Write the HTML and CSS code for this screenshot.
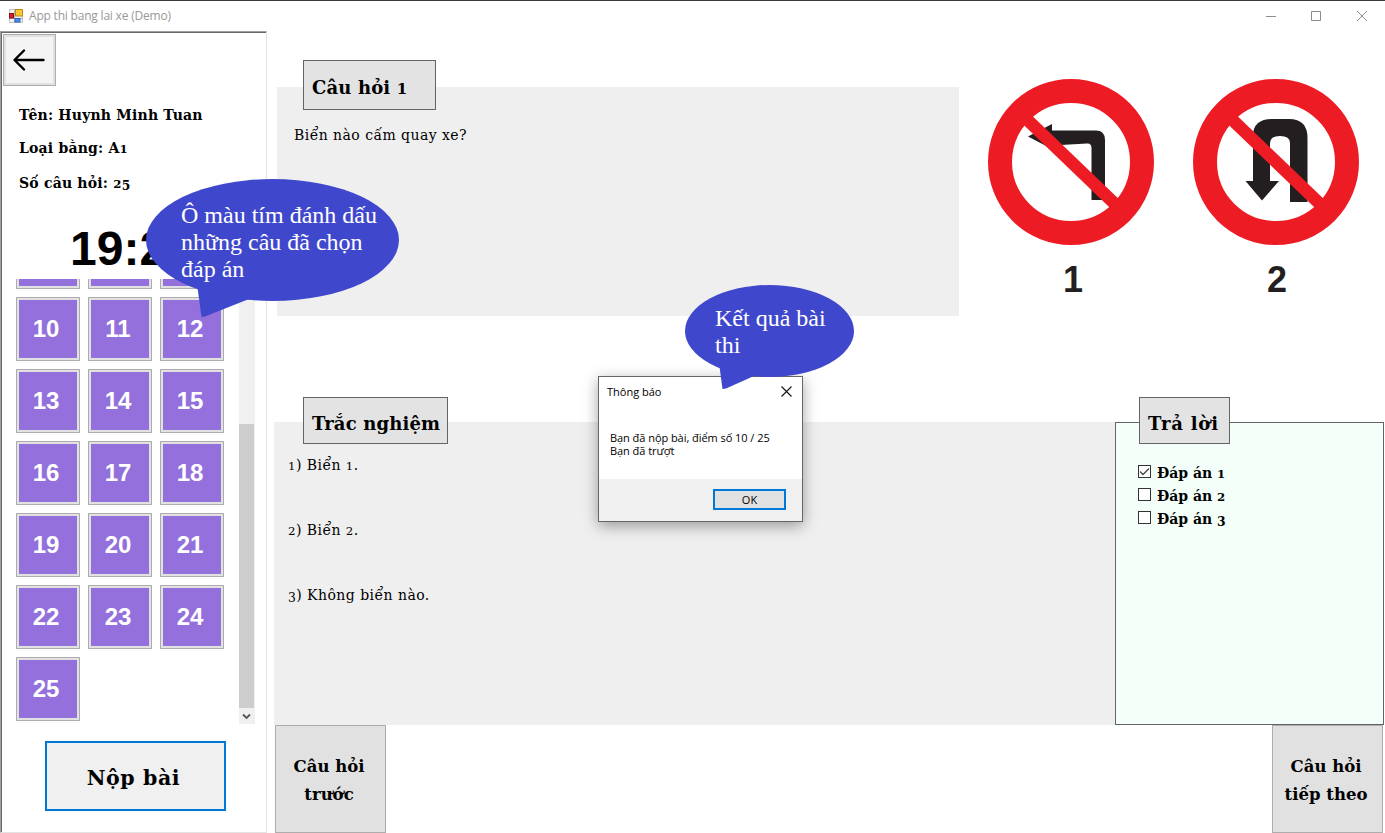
FILE: index.html
```html
<!DOCTYPE html>
<html lang="vi">
<head>
<meta charset="utf-8">
<title>App thi bang lai xe (Demo)</title>
<link rel="stylesheet" href="styles.css">
</head>
<body>
<header class="titlebar">
  <svg class="app-icon" width="14" height="14" viewBox="0 0 14 14"><rect x=".5" y=".5" width="13" height="13" fill="#f2f2f2" stroke="#c4c4c4"/><path d="M5.500 0v14M0 9.500h14" stroke="#b5b5b5"/><rect x="6.500" y=".5" width="7" height="6.500" fill="#fdc62f" stroke="#b88a1a"/><rect x=".5" y="4.500" width="4" height="4.500" fill="#d6202a" stroke="#8f1219"/><rect x="6" y="9.500" width="5" height="3.500" fill="#4b8cf0" stroke="#2d62bd"/></svg>
  <span class="app-title">App thi bang lai xe (Demo)</span>
  <svg class="win-controls" width="103" height="12" viewBox="0 0 103 12" fill="none" stroke="#8c8c8c"><path d="M1 6.500h10M46.500 1.500h9v9h-9zM92 1l10 10M102 1L92 11"/></svg>
</header>
<div class="workspace">
  <aside class="sidebar">
    <button class="back"><svg width="32" height="22" viewBox="0 0 32 22" fill="none" stroke="#000" stroke-width="2.400" stroke-linecap="round" stroke-linejoin="round"><path d="M30.500 11H2M11 1.500L1.500 11L11 20.500"/></svg></button>
    <div class="info">
      <p class="i1">Tên: Huynh Minh Tuan</p>
      <p class="i2">Loại bằng: A<span class="os">1</span></p>
      <p class="i3">Số câu hỏi: <span class="os">2</span><span class="od">5</span></p>
    </div>
    <div class="timer">19:2</div>
    <div class="scroller">
      <div class="numbers">
        <button></button><button></button><button></button>
        <button>10</button><button>11</button><button>12</button>
        <button>13</button><button>14</button><button>15</button>
        <button>16</button><button>17</button><button>18</button>
        <button>19</button><button>20</button><button>21</button>
        <button>22</button><button>23</button><button>24</button>
        <button>25</button>
      </div>
      <div class="scrollbar"><div class="thumb"></div><svg width="15" height="16" viewBox="0 0 15 16" fill="none" stroke="#555" stroke-width="1.800"><path d="M4 6.500L7.500 10L11 6.500"/></svg></div>
    </div>
    <button class="submit">Nộp bài</button>
  </aside>
  <main class="content">
    <section class="top">
      <div class="panel question">
        <h2 class="tag tag-q">Câu hỏi <span class="os">1</span></h2>
        <p class="question-text">Biển nào cấm quay xe?</p>
      </div>
      <svg class="signs" width="372" height="230" viewBox="988 75 372 230">
        <g fill="#231f20">
          <path d="M1028 136.500L1052 124V130.500H1096Q1105 130.500 1105 140V200H1091.500V148Q1091.500 143 1087 143.500L1052 145.500V149Z"/>
          <path d="M1253 181V136Q1253 119 1272 119H1289Q1307.500 119 1307.500 138V202H1290V143Q1290 136 1280 136Q1270 136 1270 143V181H1279L1262 200.500L1245.500 181Z"/>
        </g>
        <g fill="none" stroke="#ed1c24">
          <circle cx="1071" cy="162" r="71" stroke-width="24"/><path d="M1027 119.500L1115 204" stroke-width="12.500"/>
          <circle cx="1276" cy="162" r="71" stroke-width="24"/><path d="M1232 119.500L1320 204" stroke-width="12.500"/>
        </g>
        <g class="sign-num"><text x="1073" y="292">1</text><text x="1277" y="292">2</text></g>
      </svg>
    </section>
    <section class="middle">
      <div class="panel options">
        <h2 class="tag tag-o">Trắc nghiệm</h2>
        <p class="o1"><span class="os">1</span>) Biển <span class="os">1</span>.</p>
        <p class="o2"><span class="os">2</span>) Biển <span class="os">2</span>.</p>
        <p class="o3"><span class="od">3</span>) Không biển nào.</p>
      </div>
      <div class="answers">
        <h2 class="tag tag-a">Trả lời</h2>
        <label><i><svg width="11" height="11" viewBox="0 0 11 11" fill="none" stroke="#444" stroke-width="1.300"><path d="M1 5.500L4 8.500L10 2.500"/></svg></i><span>Đáp án <span class="os">1</span></span></label>
        <label><i></i><span>Đáp án <span class="os">2</span></span></label>
        <label><i></i><span>Đáp án <span class="od">3</span></span></label>
      </div>
    </section>
    <footer class="nav">
      <button>Câu hỏi<br>trước</button>
      <button>Câu hỏi<br>tiếp theo</button>
    </footer>
  </main>
</div>
<div class="dialog">
  <div class="dialog-head"><span>Thông báo</span><svg width="11" height="11" viewBox="0 0 11 11" stroke="#111" stroke-width="1.100"><path d="M.5 .5l10 10M10.500 .5l-10 10"/></svg></div>
  <div class="dialog-body">Bạn đã nộp bài, điểm số 10 / 25<br>Bạn đã trượt</div>
  <div class="dialog-foot"><button>OK</button></div>
</div>
<div class="callout c-first">
  <svg width="254" height="139" viewBox="0 0 254 139" fill="#3f48cc"><ellipse cx="126.500" cy="61" rx="126.500" ry="61"/><path d="M51 105L55.500 138L59 137.500L103 120Z"/></svg>
  <p>Ô màu tím đánh dấu<br>những câu đã chọn<br>đáp án</p>
</div>
<div class="callout c-second">
  <svg width="170" height="105" viewBox="0 0 170 105" fill="#3f48cc"><ellipse cx="84.500" cy="46" rx="84.500" ry="46"/><path d="M34 78L37.500 104L41 103.500L69 91Z"/></svg>
  <p>Kết quả bài<br>thi</p>
</div>
</body>
</html>
```
FILE: styles.css
```css
* { box-sizing: border-box; }
body { margin: 0; width: 1385px; height: 833px; overflow: hidden; background: #fff; color: #000; position: relative; display: flex; flex-direction: column; font-family: "DejaVu Serif", serif; font-size: 14px; }
p, h2 { margin: 0; white-space: nowrap; }
button { padding: 0; border-radius: 0; font: inherit; color: #000; }
.os { font-size: .84em; line-height: 0; }
.od { font-size: .88em; line-height: 0; position: relative; top: .2em; }

.titlebar { height: 31px; flex: none; border-top: 1px solid #3c3a3c; display: flex; align-items: center; padding: 0 17px 0 9px; }
.app-title { font: 12px/16px "Open Sans", sans-serif; color: #999; margin-left: 6px; flex: 1; letter-spacing: -.2px; }

.workspace { flex: 1; display: flex; min-height: 0; }
.sidebar { width: 267px; flex: none; border: 1px solid #e3e3e3; border-left-color: #a0a0a0; border-top-color: #a0a0a0; box-shadow: inset 1px 1px #696969; padding: 2px 0 0 2px; display: flex; flex-direction: column; }
.back { width: 53px; height: 52px; flex: none; border: 1px solid #adadad; background: #f4f4f4; box-shadow: inset 0 0 0 2px #e1e1e1; display: flex; align-items: center; justify-content: center; padding-right: 1px; }
.info { height: 136px; flex: none; padding: 18px 0 0 16px; font-weight: bold; letter-spacing: .2px; line-height: 22px; }
.i2 { margin-top: 11px; }
.i3 { margin-top: 13px; }
.timer { font: bold 48px/54px "Liberation Sans", Arial, sans-serif; height: 57px; padding-left: 67px; flex: none; }
.scroller { height: 445px; flex: none; margin-left: 13px; display: flex; overflow: hidden; }
.numbers { width: 223px; margin-top: -54px; display: grid; grid-template-columns: repeat(3, 64px); grid-auto-rows: 64px; gap: 8px; align-content: start; }
.numbers button { border: 1px solid #adadad; background: #9370db; box-shadow: inset 0 0 0 2px #e1e1e1; color: #fff; font: bold 24px/1 "Liberation Sans", Arial, sans-serif; padding-right: 4px; }
.scrollbar { width: 16px; background: #f0f0f0; display: flex; flex-direction: column; justify-content: flex-end; }
.thumb { width: 15px; height: 284px; background: #cdcdcd; }
.submit { width: 181px; height: 70px; flex: none; margin: 17px 0 0 42px; border: 2px solid #0078d7; background: #f0f0f0; font-weight: bold; font-size: 20.5px; padding: 4px 4px 0 0; letter-spacing: .6px; }

.content { flex: 1; margin-left: 7px; display: flex; flex-direction: column; }
.top { height: 391px; flex: none; display: flex; }
.panel { background: #efefef; position: relative; }
.question { width: 682px; height: 229px; margin: 56px 0 0 3px; padding: 37px 0 0 17px; }
.question-text { letter-spacing: .45px; line-height: 22px; }
.tag { position: absolute; border: 1px solid #646464; background: #e3e3e3; font-size: 18px; font-weight: bold; padding-left: 8px; letter-spacing: .15px; }
.tag-q { left: 26px; top: -27px; width: 133px; height: 50px; line-height: 53px; }
.tag-o { left: 29px; top: -25px; width: 145px; height: 47px; line-height: 51px; }
.tag-a { left: 23px; top: -26px; width: 91px; height: 47px; line-height: 51px; letter-spacing: .8px; }
.signs { margin: 44px 0 0 29px; flex: none; }
.sign-num { font: bold 36px "Liberation Sans", Arial, sans-serif; fill: #231f20; text-anchor: middle; }
.middle { height: 303px; flex: none; display: flex; }
.options { width: 841px; padding: 32px 0 0 14px; line-height: 22px; }
.options p { letter-spacing: .45px; }
.options p + p { margin-top: 43px; }
.answers { width: 269px; position: relative; border: 1px solid #646464; background: #f5fffa; padding: 38px 0 0 22px; font-weight: bold; }
.answers label { display: flex; align-items: center; height: 23px; gap: 6px; }
.answers i { width: 13px; height: 13px; border: 1px solid #333; background: #fff; display: flex; margin-top: -3px; }
.nav { flex: 1; display: flex; justify-content: space-between; padding: 0 2px 0 1px; }
.nav button { width: 111px; height: 108px; border: 1px solid #adadad; background: #e1e1e1; font-weight: bold; font-size: 16.5px; line-height: 28px; padding: 3px 3px 0 0; white-space: nowrap; }

.dialog { position: absolute; left: 598px; top: 376px; width: 205px; height: 146px; border: 1px solid #666; background: #fff; box-shadow: 0 4px 14px rgba(0,0,0,.36); display: flex; flex-direction: column; font: 11px/13px "Open Sans", sans-serif; }
.dialog-head { height: 29px; display: flex; justify-content: space-between; align-items: center; padding: 0 10px 0 8px; }
.dialog-body { height: 73px; padding: 25px 0 0 11px; white-space: nowrap; letter-spacing: -.05px; }
.dialog-foot { flex: 1; background: #f0f0f0; padding: 10px 0 0 114px; }
.dialog-foot button { width: 73px; height: 21px; border: 2px solid #0078d7; background: #e1e1e1; display: block; }

.callout { position: absolute; color: #fff; font: 24px/27px "Liberation Serif", "Times New Roman", serif; }
.callout svg { display: block; }
.callout p { position: absolute; }
.c-first { left: 146px; top: 179px; }
.c-first p { left: 35px; top: 23px; }
.c-second { left: 685px; top: 285px; }
.c-second p { left: 30px; top: 20px; }
```
